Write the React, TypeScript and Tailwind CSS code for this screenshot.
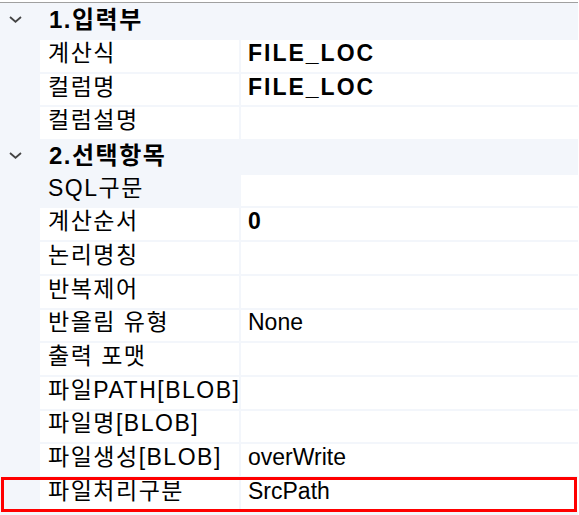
import React from "react";

type Prop = { label: string; value?: string; bold?: boolean; readOnly?: boolean };

const inputProps: Prop[] = [
  { label: "계산식", value: "FILE_LOC", bold: true },
  { label: "컬럼명", value: "FILE_LOC", bold: true },
  { label: "컬럼설명" },
];

const selectProps: Prop[] = [
  { label: "SQL구문", readOnly: true },
  { label: "계산순서", value: "0", bold: true },
  { label: "논리명칭" },
  { label: "반복제어" },
  { label: "반올림 유형", value: "None" },
  { label: "출력 포맷" },
  { label: "파일PATH[BLOB]" },
  { label: "파일명[BLOB]" },
  { label: "파일생성[BLOB]", value: "overWrite" },
  { label: "파일처리구분", value: "SrcPath" },
];

function Chevron() {
  return (
    <svg width="13" height="7" viewBox="0 0 13 7" className="block">
      <path d="M1 1 L6.5 5.8 L12 1" fill="none" stroke="#444" strokeWidth="1.8" />
    </svg>
  );
}

function Category({ title, tall }: { title: string; tall?: boolean }) {
  return (
    <div className={`flex items-center ${tall ? "h-[37px]" : "h-[33.7px]"} pb-[4px]`}>
      <div className="w-[40px] pl-[9px]">
        <Chevron />
      </div>
      <span className="pl-[9px] text-[24px] font-bold leading-none tracking-[1.5px] text-black">{title}</span>
    </div>
  );
}

function Row({ p }: { p: Prop }) {
  return (
    <div className="h-[33.7px] pl-[40px]">
      <div className="flex h-[31.7px] gap-[2px]">
        <div
          className={`w-[199px] overflow-hidden whitespace-nowrap flex items-center pl-[8px] pb-[5px] text-[23px] leading-none tracking-[1.5px] text-black ${
            p.readOnly ? "bg-transparent" : "bg-white"
          }`}
        >
          {p.label}
        </div>
        <div
          className={`flex-1 bg-white flex items-center pl-[7px] pb-[5px] text-[23px] leading-none text-black whitespace-nowrap overflow-hidden ${
            p.bold ? "font-bold tracking-[2px]" : ""
          }`}
        >
          {p.value}
        </div>
      </div>
    </div>
  );
}

export default function App() {
  return (
    <div
      className="w-[579px] h-[515px] bg-white overflow-hidden"
      style={{ fontFamily: "'Liberation Sans', 'Noto Sans CJK KR', sans-serif" }}
    >
      <div className="h-[2px]" />
      <div className="h-px bg-[#a0a0a0] mr-px" />
      <div className="relative bg-[#f3f6fb] mr-px h-[512px]">
        <Category title="1.입력부" tall />
        {inputProps.map((p) => (
          <Row key={p.label} p={p} />
        ))}
        <Category title="2.선택항목" />
        {selectProps.map((p) => (
          <Row key={p.label} p={p} />
        ))}
        {/* highlight box around the last row */}
        <div className="absolute left-[1px] top-[474px] w-[576px] h-[35px] border-[3px] border-[#ff0000] pointer-events-none" />
      </div>
    </div>
  );
}
